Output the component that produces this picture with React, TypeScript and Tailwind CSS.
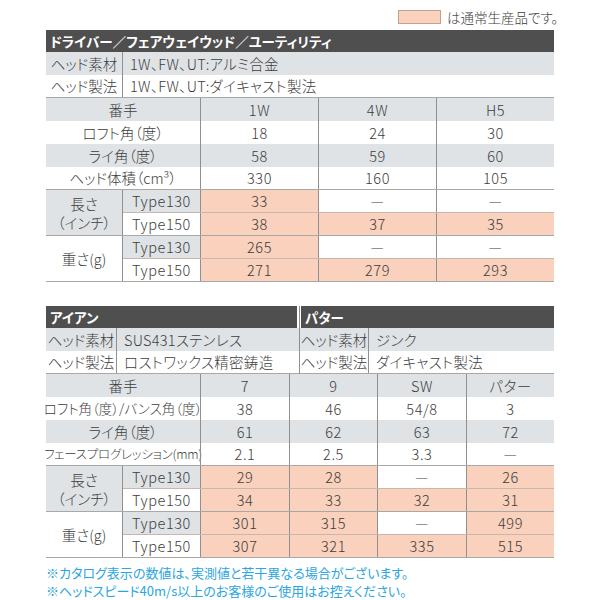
import React from "react";

const F = "font-['Noto_Sans_CJK_JP','Noto_Sans',sans-serif] [font-feature-settings:'palt']";
const GRAY = "bg-[#dfe3e5]";
const SAL = "bg-[#f9d1bc]";
const VL = "border-l border-[#8f8f8f]";
const C = "flex items-center justify-center";

type V = { t: string; s: boolean };

function HeadRow({ label, value, gray, lw, last }: { label: string; value: string; gray: boolean; lw: number; last?: boolean }) {
  return (
    <div className={`flex h-[23px] ${gray ? GRAY : "bg-white"} ${last ? "border-b border-[#a8a8a8]" : ""}`}>
      <div className={`${C} border-r border-[#8f8f8f] shrink-0`} style={{ width: lw }}>
        {label}
      </div>
      <div className="flex-1 flex items-center pl-[7px] whitespace-nowrap tracking-[0.02em]">{value}</div>
    </div>
  );
}

function SpecRow({ label, vals, widths, gray, last, labelCls = "" }: { label: string; vals: string[]; widths: number[]; gray: boolean; last?: boolean; labelCls?: string }) {
  return (
    <div className={`flex h-[23px] ${gray ? GRAY : "bg-white"} ${last ? "border-b border-[#a8a8a8]" : ""}`}>
      <div className={`w-[154px] shrink-0 ${C} whitespace-nowrap ${labelCls}`}>{label}</div>
      {vals.map((v, i) => (
        <div key={i} className={`${C} ${VL} shrink-0 tracking-[0.04em]`} style={{ width: widths[i] }}>
          {v}
        </div>
      ))}
    </div>
  );
}

function Group({ label, gray, rows, widths }: { label: React.ReactNode; gray: boolean; rows: V[][]; widths: number[] }) {
  return (
    <div className="flex border-b border-[#a8a8a8]">
      <div className={`w-[77px] shrink-0 ${gray ? GRAY : "bg-white"} flex flex-col items-center justify-center leading-[19px] border-r border-[#8f8f8f]`}>
        {label}
      </div>
      <div className="flex flex-col flex-1">
        {rows.map((r, ri) => (
          <div key={ri} className={`flex ${ri === 0 ? "h-[23px] border-b border-[#c9b7ad]" : "h-[22px]"}`}>
            <div className={`w-[77px] shrink-0 ${C} ${ri === 0 ? GRAY : "bg-white"} tracking-[0.04em]`}>
              {ri === 0 ? "Type130" : "Type150"}
            </div>
            {r.map((v, i) => (
              <div key={i} className={`${C} ${VL} shrink-0 tracking-[0.04em] ${v.s ? SAL : "bg-white"}`} style={{ width: widths[i] }}>
                {v.t}
              </div>
            ))}
          </div>
        ))}
      </div>
    </div>
  );
}

const s = (t: string): V => ({ t, s: true });
const w = (t: string): V => ({ t, s: false });
const DASH = "—";

const Len = (
  <>
    <span>長さ</span>
    <span>（インチ）</span>
  </>
);
const Wt = <span>重さ(g)</span>;

export default function App() {
  const w1 = [118, 118, 118];
  const w2 = [89, 88, 89, 88];
  return (
    <div className={`w-[600px] h-[600px] bg-white overflow-hidden text-[#3d3d3d] text-[14.5px] font-light ${F}`}>
      <div className="pl-[46px] w-[554px]">
        <div className="h-[30px] flex items-start justify-end pt-[10px]">
          <div className={`w-[43px] h-[14px] ${SAL} border border-[#c7a08d]`} />
          <span className="ml-[6px] text-[13.5px] leading-[14px] mr-[-4px]">は通常生産品です。</span>
        </div>

        <div className="w-[508px]">
          <div className="h-[22px] bg-[#4f4f4f] text-white font-bold text-[13.5px] flex items-center pl-[4px]">
            ドライバー／フェアウェイウッド／ユーティリティ
          </div>
          <HeadRow label="ヘッド素材" value="1W、FW、UT:アルミ合金" gray lw={77} />
          <HeadRow label="ヘッド製法" value="1W、FW、UT:ダイキャスト製法" gray={false} lw={77} last />
          <SpecRow label="番手" vals={["1W", "4W", "H5"]} widths={w1} gray />
          <SpecRow label="ロフト角（度）" vals={["18", "24", "30"]} widths={w1} gray={false} />
          <SpecRow label="ライ角（度）" vals={["58", "59", "60"]} widths={w1} gray />
          <SpecRow label="ヘッド体積（cm³）" vals={["330", "160", "105"]} widths={w1} gray={false} last />
          <Group label={Len} gray widths={w1} rows={[[s("33"), w(DASH), w(DASH)], [s("38"), s("37"), s("35")]]} />
          <Group label={Wt} gray={false} widths={w1} rows={[[s("265"), w(DASH), w(DASH)], [s("271"), s("279"), s("293")]]} />
        </div>

        <div className="w-[508px] mt-[24px]">
          <div className="flex">
            <div className="w-[254px] border-r border-[#8f8f8f]">
              <div className="h-[22px] bg-[#4f4f4f] text-white font-bold text-[13.5px] flex items-center pl-[4px] mr-[2px]">アイアン</div>
              <HeadRow label="ヘッド素材" value="SUS431ステンレス" gray lw={71} />
              <HeadRow label="ヘッド製法" value="ロストワックス精密鋳造" gray={false} lw={71} last />
            </div>
            <div className="w-[254px]">
              <div className="h-[22px] bg-[#4f4f4f] text-white font-bold text-[13.5px] flex items-center pl-[4px] ml-[1px]">パター</div>
              <HeadRow label="ヘッド素材" value="ジンク" gray lw={69} />
              <HeadRow label="ヘッド製法" value="ダイキャスト製法" gray={false} lw={69} last />
            </div>
          </div>
          <SpecRow label="番手" vals={["7", "9", "SW", "パター"]} widths={w2} gray />
          <SpecRow label="ロフト角（度）/バンス角（度）" vals={["38", "46", "54/8", "3"]} widths={w2} gray={false} labelCls="text-[13.5px]" />
          <SpecRow label="ライ角（度）" vals={["61", "62", "63", "72"]} widths={w2} gray />
          <SpecRow label="フェースプログレッション(mm)" vals={["2.1", "2.5", "3.3", DASH]} widths={w2} gray={false} last labelCls="text-[12.5px] tracking-[-0.02em]" />
          <Group label={Len} gray widths={w2} rows={[[s("29"), s("28"), w(DASH), s("26")], [s("34"), s("33"), s("32"), s("31")]]} />
          <Group label={Wt} gray={false} widths={w2} rows={[[s("301"), s("315"), w(DASH), s("499")], [s("307"), s("321"), s("335"), s("515")]]} />
        </div>

        <div className="mt-[6px] text-[#2ba6de] text-[13px] leading-[18px] whitespace-nowrap font-normal">
          <div>※カタログ表示の数値は、実測値と若干異なる場合がございます。</div>
          <div>※ヘッドスピード40m/s以上のお客様のご使用はお控えください。</div>
        </div>
      </div>
    </div>
  );
}
